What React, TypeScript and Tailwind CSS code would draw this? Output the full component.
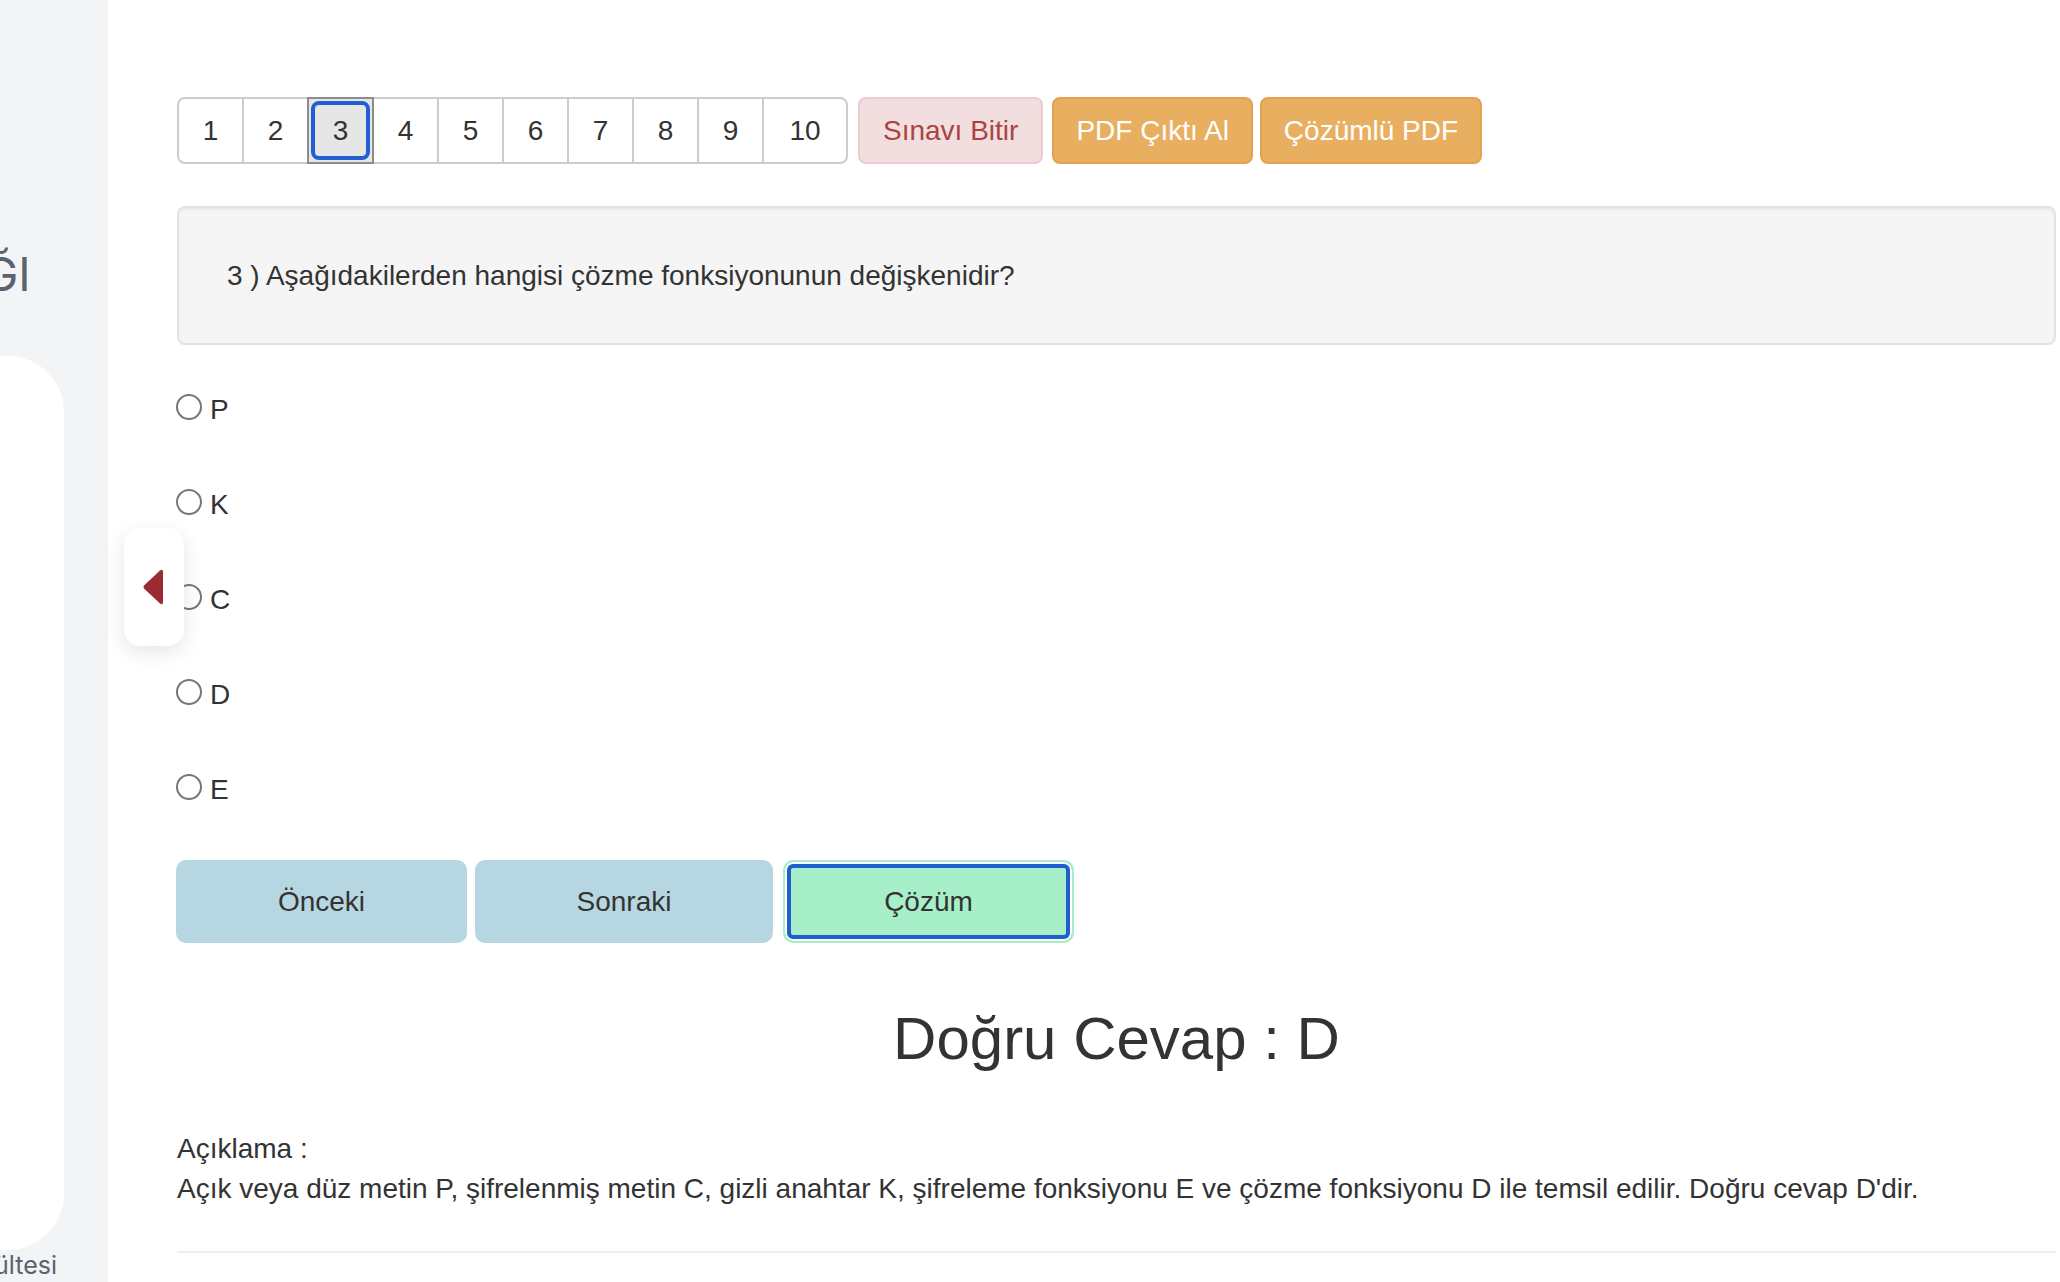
import React from 'react';

const pages = [1, 2, 3, 4, 5, 6, 7, 8, 9, 10];
const options = ['P', 'K', 'C', 'D', 'E'];

const PageCell: React.FC<{ n: number; active: boolean }> = ({ n, active }) => {
    const first = n === 1;
    const last = n === 10;
    return (
        <button
            className={
                'relative h-[67px] flex items-center justify-center border-2 text-[28px] ' +
                (active ? 'bg-[#e6e6e6] border-[#8c8c8c] z-10 ' : 'bg-white border-[#cccccc] ') +
                (first ? 'w-[67px] rounded-l-[8px] ' : '-ml-[2px] ') +
                (last ? 'w-[86px] rounded-r-[8px]' : 'w-[67px]')
            }
        >
            {active && (
                <span className="absolute inset-[2px] rounded-[8px] border-4 border-[#1f61d2]" />
            )}
            <span className="relative">{n}</span>
        </button>
    );
};

export default function App() {
    return (
        <div className="flex h-[1282px] overflow-hidden bg-white">
            {/* Sidebar (cut off on the left) */}
            <aside className="w-[108px] shrink-0 bg-[#f3f4f6] flex flex-col overflow-hidden font-['Inter',sans-serif] text-[#5b6270]">
                <div className="h-[356px] pt-[250px] -ml-[16px] text-[46px] leading-[48px] whitespace-nowrap">ĞI</div>
                <div className="w-[64px] h-[894px] bg-white rounded-r-[56px]" />
                <div className="-ml-[6px] text-[25px] leading-[30px] whitespace-nowrap">ültesi</div>
            </aside>

            <main className="relative flex-1 pl-[69px] pr-[4px] pt-[97px] font-['Liberation_Sans',Arial,sans-serif] text-[#333]">
                {/* Pagination + actions */}
                <div className="flex items-start">
                    <div className="flex">
                        {pages.map(n => (
                            <PageCell key={n} n={n} active={n === 3} />
                        ))}
                    </div>
                    <button className="ml-[10px] h-[67px] px-[23px] rounded-[8px] border-2 border-[#ebccd1] bg-[#f2dede] text-[28px] text-[#a94442]">
                        Sınavı Bitir
                    </button>
                    <button className="ml-[9px] h-[67px] px-[22px] rounded-[8px] border-2 border-[#e3a24f] bg-[#e9af60] text-[28px] text-white">
                        PDF Çıktı Al
                    </button>
                    <button className="ml-[7px] h-[67px] px-[22px] rounded-[8px] border-2 border-[#e3a24f] bg-[#e9af60] text-[28px] text-white">
                        Çözümlü PDF
                    </button>
                </div>

                {/* Question */}
                <div className="mt-[42px] h-[139px] flex items-center px-[48px] rounded-[8px] border-2 border-[#e3e3e3] bg-[#f5f5f5] shadow-[inset_0_2px_2px_rgba(0,0,0,0.05)] text-[28px] leading-[40px]">
                    3 ) Aşağıdakilerden hangisi çözme fonksiyonunun değişkenidir?
                </div>

                {/* Options */}
                <div className="mt-[14px] flex flex-col">
                    {options.map(o => (
                        <label key={o} className="h-[95px] flex items-center">
                            <span className="-ml-[1px] w-[26px] h-[26px] rounded-full border-2 border-[#767676] bg-white" />
                            <span className="ml-[8px] mt-[6px] text-[28px] leading-[32px]">{o}</span>
                        </label>
                    ))}
                </div>

                {/* Navigation */}
                <div className="mt-[26px] flex">
                    <button className="-ml-[1px] w-[291px] h-[83px] rounded-[10px] bg-[#b6d7e2] text-[28px]">Önceki</button>
                    <button className="ml-[8px] w-[298px] h-[83px] rounded-[10px] bg-[#b6d7e2] text-[28px]">Sonraki</button>
                    <button className="ml-[10px] w-[291px] h-[83px] rounded-[10px] border-2 border-[#a6efc9] bg-[#a6efc9] shadow-[inset_0_0_0_2px_#fff,inset_0_0_0_6px_#1f5fcc] text-[28px]">
                        Çözüm
                    </button>
                </div>

                {/* Answer */}
                <h2 className="mt-[63px] text-center text-[60px] leading-[66px]">Doğru Cevap : D</h2>

                <div className="mt-[57px] text-[28px] leading-[40px]">
                    <div>Açıklama :</div>
                    <div>
                        Açık veya düz metin P, şifrelenmiş metin C, gizli anahtar K, şifreleme fonksiyonu E ve çözme fonksiyonu D ile temsil edilir. Doğru cevap D'dir.
                    </div>
                </div>

                <hr className="mt-[42px] border-0 border-t-2 border-[#eeeeee]" />

                {/* Collapse tab over the content */}
                <button className="absolute left-[16px] top-[528px] w-[60px] h-[118px] flex items-center justify-center rounded-[16px] bg-white shadow-[0_6px_20px_rgba(0,0,0,0.1)]">
                    <svg width="24" height="40" viewBox="0 0 24 40" className="-ml-[3px]">
                        <path d="M19 3.5 Q22 1.5 22 5 L22 35 Q22 38.5 19 36.5 L3.5 22 Q1.5 20 3.5 18 Z" fill="#9b2b33" />
                    </svg>
                </button>
            </main>
        </div>
    );
}
